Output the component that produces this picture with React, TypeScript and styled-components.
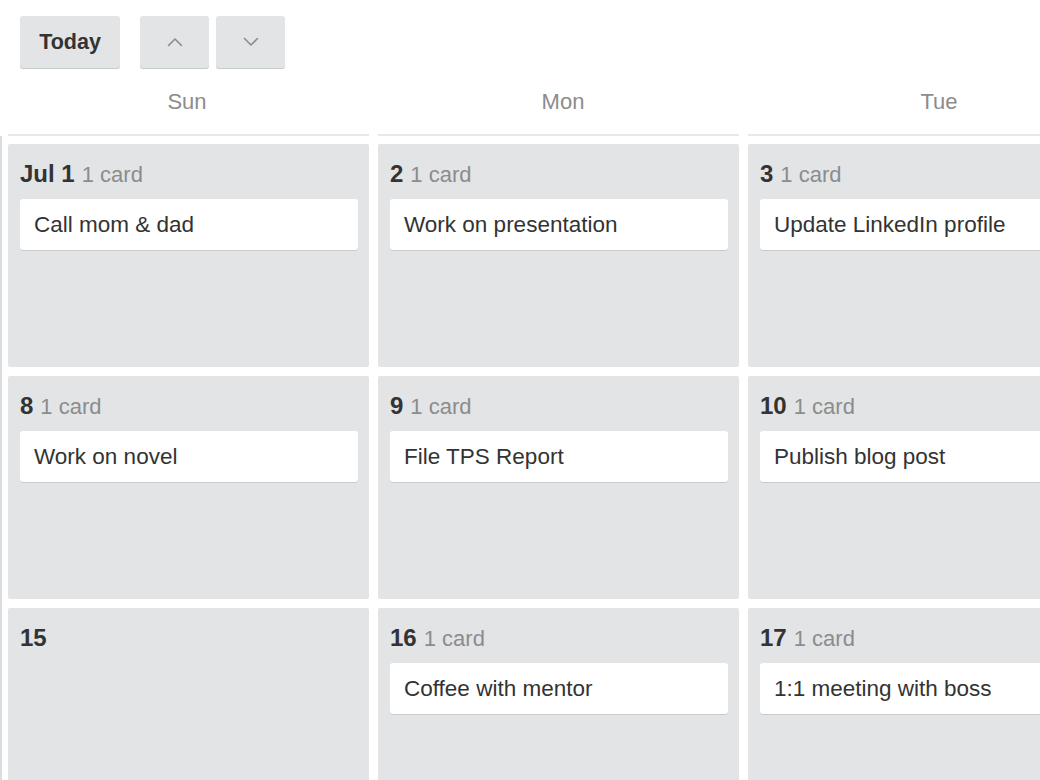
import React from 'react';
import styled, { createGlobalStyle } from 'styled-components';

const GlobalStyle = createGlobalStyle`
  html, body {
    margin: 0;
    padding: 0;
    background: #fff;
    overflow: hidden;
  }
  body {
    font-family: 'Liberation Sans', Arial, sans-serif;
    color: #333;
  }
`;

const Page = styled.div`
  width: 1040px;
  height: 780px;
  overflow: hidden;
`;

const Toolbar = styled.div`
  display: flex;
  align-items: flex-start;
  padding: 16px 20px 0;
  height: 69px;
  box-sizing: border-box;
`;

const NavGroup = styled.div`
  display: flex;
  gap: 7px;
  margin-left: 20px;
`;

const Button = styled.button<{ width: number }>`
  width: ${p => p.width}px;
  height: 52px;
  border: none;
  border-radius: 3px;
  background: #e2e4e6;
  box-shadow: 0 1px 0 #c4c9cc;
  display: flex;
  align-items: center;
  justify-content: center;
  padding: 0;
  font-family: 'Liberation Sans', Arial, sans-serif;
  font-size: 21.5px;
  font-weight: bold;
  color: #333;
  cursor: pointer;
`;

const HeaderRow = styled.div`
  display: grid;
  grid-template-columns: repeat(3, 361px);
  column-gap: 9px;
  padding-left: 8px;
`;

// header labels drift slightly right of the cell centres in the original
const DayName = styled.div<{ offset: number }>`
  padding: 21px ${p => (p.offset < 0 ? -2 * p.offset : 0)}px 20px
    ${p => (p.offset > 0 ? 2 * p.offset : 0)}px;
  line-height: 24px;
  font-size: 22px;
  text-align: center;
  color: #8c8c8c;
  border-bottom: 2px solid #e6e8e9;
`;

const Body = styled.div`
  display: grid;
  grid-template-columns: repeat(3, 361px);
  grid-auto-rows: 223px;
  gap: 9px;
  padding: 8px 0 0 6px;
  border-left: 2px solid #dadcde;
`;

const Cell = styled.div`
  background: #e2e4e6;
  border-radius: 2px;
  padding: 17px 11px 12px 12px;
  box-sizing: border-box;
`;

const DateLabel = styled.div`
  line-height: 26px;
  font-size: 22px;
  white-space: nowrap;
`;

const DateNum = styled.span`
  font-size: 24px;
  font-weight: bold;
  color: #333;
`;

const Count = styled.span`
  color: #8c8c8c;
  margin-left: 7px;
`;

const Card = styled.div`
  margin-top: 11px;
  background: #fff;
  border-radius: 3px;
  box-shadow: 0 1px 0 #c9cccf;
  padding: 13px 14px;
  line-height: 25px;
  font-size: 22.5px;
  color: #333;
  white-space: nowrap;
  overflow: hidden;
`;

const Chevron = ({ up }: { up?: boolean }) => (
  <svg width="16" height="10" viewBox="0 0 16 10" fill="none">
    <polyline
      points={up ? '1.5,8.5 8,2 14.5,8.5' : '1.5,1.5 8,8 14.5,1.5'}
      stroke="#8a8c8e"
      strokeWidth="1.6"
      strokeLinecap="round"
      strokeLinejoin="round"
    />
  </svg>
);

type Day = { label: string; cards: string[] };

const weekdays = ['Sun', 'Mon', 'Tue'];

const days: Day[] = [
  { label: 'Jul 1', cards: ['Call mom & dad'] },
  { label: '2', cards: ['Work on presentation'] },
  { label: '3', cards: ['Update LinkedIn profile'] },
  { label: '8', cards: ['Work on novel'] },
  { label: '9', cards: ['File TPS Report'] },
  { label: '10', cards: ['Publish blog post'] },
  { label: '15', cards: [] },
  { label: '16', cards: ['Coffee with mentor'] },
  { label: '17', cards: ['1:1 meeting with boss'] },
];

const App: React.FC = () => (
  <Page>
    <GlobalStyle />
    <Toolbar>
      <Button width={100}>Today</Button>
      <NavGroup>
        <Button width={69} aria-label="Previous">
          <Chevron up />
        </Button>
        <Button width={69} aria-label="Next">
          <Chevron />
        </Button>
      </NavGroup>
    </Toolbar>

    <HeaderRow>
      {weekdays.map((d, i) => (
        <DayName key={d} offset={i * 6 - 1.5}>
          {d}
        </DayName>
      ))}
    </HeaderRow>

    <Body>
      {days.map(day => (
        <Cell key={day.label}>
          <DateLabel>
            <DateNum>{day.label}</DateNum>
            {day.cards.length > 0 && (
              <Count>
                {day.cards.length} {day.cards.length === 1 ? 'card' : 'cards'}
              </Count>
            )}
          </DateLabel>
          {day.cards.map(c => (
            <Card key={c}>{c}</Card>
          ))}
        </Cell>
      ))}
    </Body>
  </Page>
);

export default App;
